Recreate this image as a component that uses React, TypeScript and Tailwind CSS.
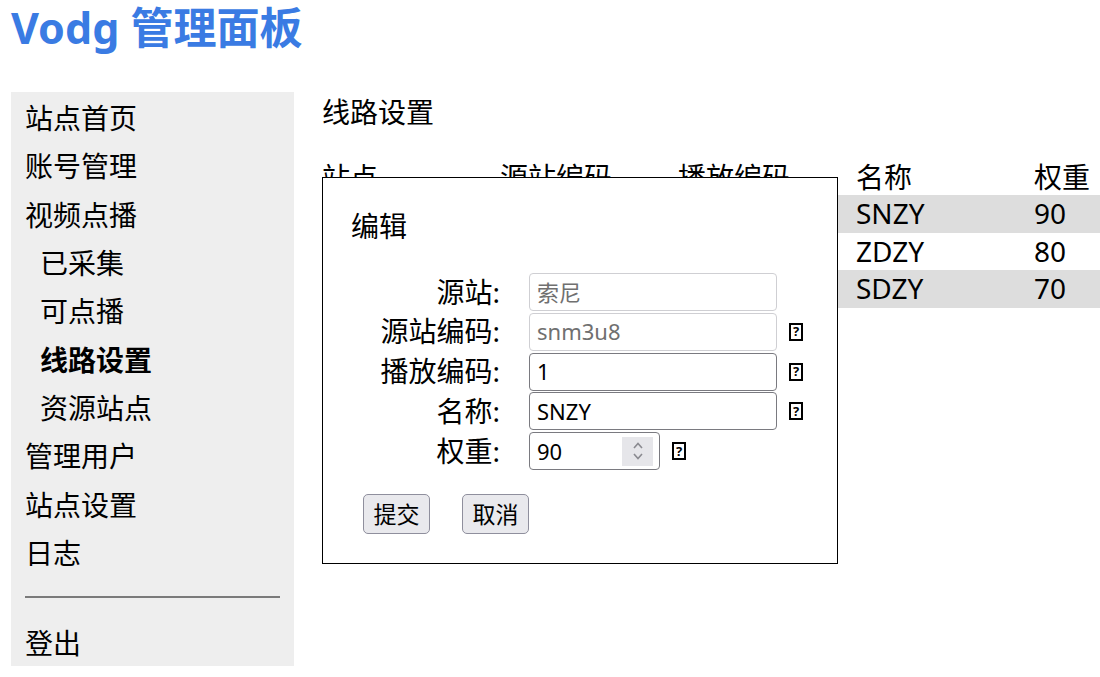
import React from "react";

const Help = () => (
  <span className="ml-[12px] inline-flex h-[18px] w-[14px] items-center justify-center border-2 border-black text-[13px] font-bold leading-none text-black">
    ?
  </span>
);

const Field = ({
  label,
  value,
  disabled,
  help,
}: {
  label: string;
  value: string;
  disabled?: boolean;
  help?: boolean;
}) => (
  <div className="flex h-[39.75px] items-start">
    <div className="flex h-[38px] w-[149px] items-center justify-end text-[28px] leading-[37px]">{label}:</div>
    <div
      className={
        "ml-[29px] flex h-[38px] w-[248px] items-center rounded-[4px] border bg-white pl-[7px] text-[22px] " +
        (disabled ? "border-[#cfcfd3] text-[#707070]" : "border-[#7a7a80] text-black")
      }
    >
      {value}
    </div>
    {help && (
      <div className="flex h-[38px] items-center">
        <Help />
      </div>
    )}
  </div>
);

export default function App() {
  const nav: { t: string; sub?: boolean; bold?: boolean }[] = [
    { t: "站点首页" },
    { t: "账号管理" },
    { t: "视频点播" },
    { t: "已采集", sub: true },
    { t: "可点播", sub: true },
    { t: "线路设置", sub: true, bold: true },
    { t: "资源站点", sub: true },
    { t: "管理用户" },
    { t: "站点设置" },
    { t: "日志" },
  ];
  const rows = [
    ["索尼", "snm3u8", "1", "SNZY", "90"],
    ["最大", "zuidam3u8", "1", "ZDZY", "80"],
    ["闪电", "sdm3u8", "1", "SDZY", "70"],
  ];
  return (
    <div className="h-[677px] w-[1100px] overflow-hidden bg-white text-black font-['Noto_Sans','Noto_Sans_CJK_SC',sans-serif]">
      <h1 className="h-[56px] pl-[11px] text-[43px] font-bold leading-[56px] text-[#3a7be3]">Vodg 管理面板</h1>
      <div className="mt-[36px] flex items-start">
        <nav className="ml-[11px] w-[283px] shrink-0 bg-[#eeeeee] pt-[2px] text-[28px]">
          {nav.map((n) => (
            <div
              key={n.t}
              className={
                "leading-[48.33px] " + (n.sub ? "pl-[29px] " : "pl-[14px] ") + (n.bold ? "font-bold" : "")
              }
            >
              {n.t}
            </div>
          ))}
          <div className="mx-[14px] mt-[19px] border-t-2 border-[#7a7a7a]" />
          <div className="mt-[22px] pl-[14px] leading-[46px]">登出</div>
        </nav>
        <main className="relative ml-[28px] flex-1">
          <h2 className="text-[28px] leading-[40px]">线路设置</h2>
          <table className="mt-[28px] w-[890px] table-fixed border-collapse text-[28px]">
            <thead>
              <tr className="h-[35px] text-left">
                {["站点", "源站编码", "播放编码", "名称", "权重"].map((h) => (
                  <th key={h} className="w-[178px] p-0 font-normal leading-[35px]">
                    {h}
                  </th>
                ))}
              </tr>
            </thead>
            <tbody>
              {rows.map((r, i) => (
                <tr key={i} className={"h-[37.5px] " + (i % 2 === 0 ? "bg-[#dddddd]" : "bg-white")}>
                  {r.map((c, j) => (
                    <td key={j} className="p-0 leading-[37px]">
                      {c}
                    </td>
                  ))}
                </tr>
              ))}
            </tbody>
          </table>
          <div className="absolute left-0 top-[85px] h-[387px] w-[516px] border border-black bg-white px-[28px] pt-[30px]">
            <div className="text-[28px] leading-[37px]">编辑</div>
            <div className="mt-[28px] flex flex-col">
              <Field label="源站" value="索尼" disabled />
              <Field label="源站编码" value="snm3u8" disabled help />
              <Field label="播放编码" value="1" help />
              <Field label="名称" value="SNZY" help />
              <div className="flex h-[39.75px] items-start">
                <div className="flex h-[38px] w-[149px] items-center justify-end text-[28px] leading-[37px]">权重:</div>
                <div className="ml-[29px] flex h-[38px] w-[131px] items-center rounded-[4px] border border-[#7a7a80] bg-white pl-[7px] text-[22px]">
                  <span>90</span>
                  <div className="ml-auto mr-[6px] flex h-[29px] w-[31px] flex-col items-center justify-center bg-[#e6e6ea]">
                    <svg width="12" height="24" viewBox="0 0 12 24" fill="none" stroke="#8a8a90" strokeWidth="1.6">
                      <path d="M2 9 L6 4.5 L10 9" />
                      <path d="M2 15 L6 19.5 L10 15" />
                    </svg>
                  </div>
                </div>
                <div className="flex h-[38px] items-center">
                  <Help />
                </div>
              </div>
            </div>
            <div className="mt-[22px] flex gap-[32px] pl-[12px]">
              <button className="h-[40px] w-[67px] rounded-[5px] border border-[#8f8f9d] bg-[#e9e9ed] text-[23px]">
                提交
              </button>
              <button className="h-[40px] w-[67px] rounded-[5px] border border-[#8f8f9d] bg-[#e9e9ed] text-[23px]">
                取消
              </button>
            </div>
          </div>
        </main>
      </div>
    </div>
  );
}
